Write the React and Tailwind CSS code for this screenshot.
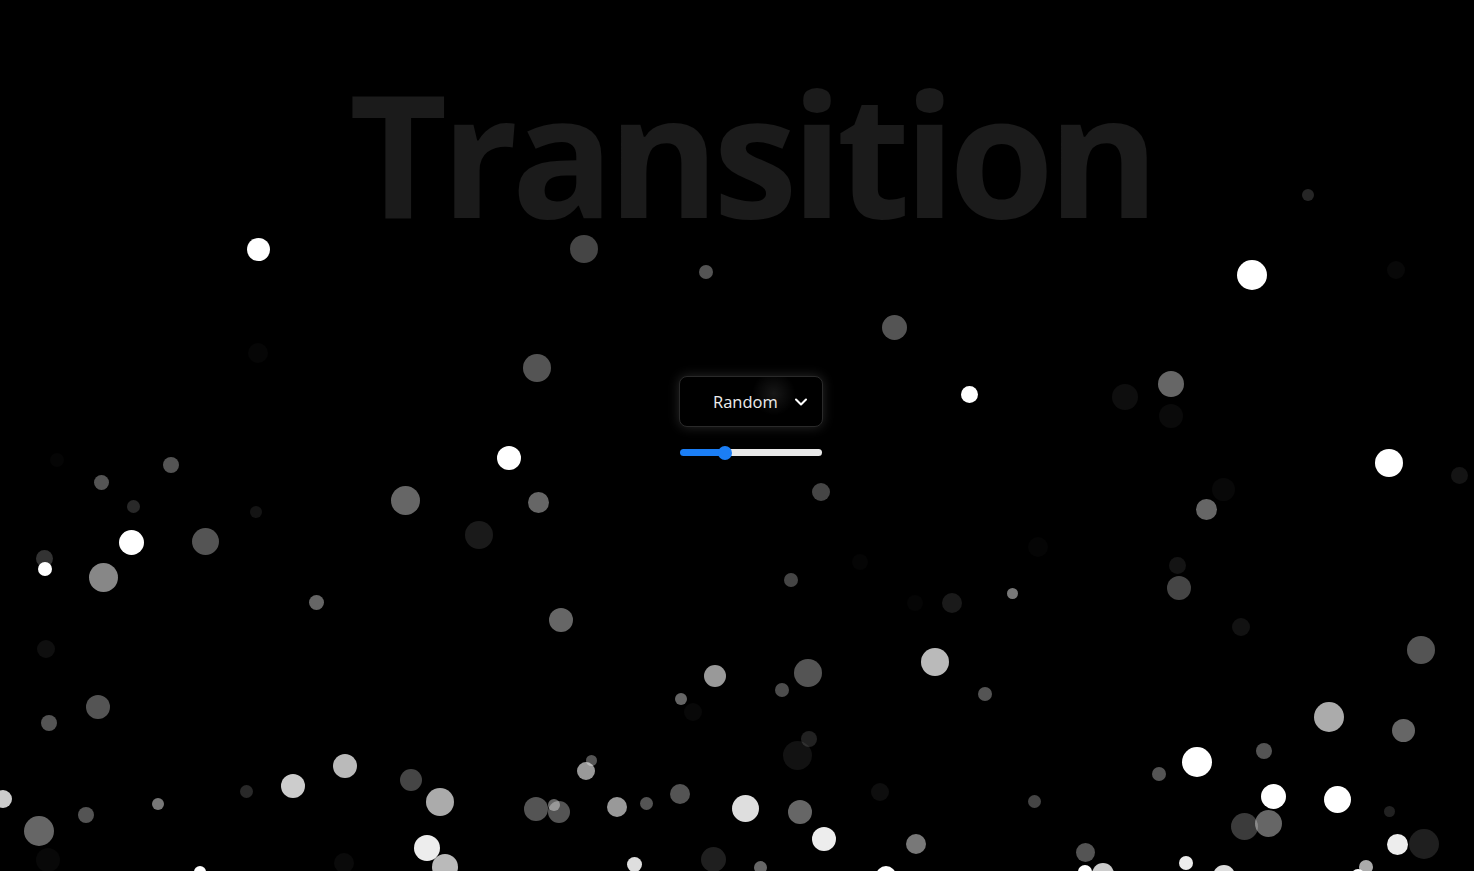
import { ChevronDown } from 'lucide-react'

// particles: [x, y, diameter, opacity]
const DOTS = [
  [258, 249, 23, 1], [584, 249, 28, 0.27], [706, 272, 14, 0.33], [1308, 195, 12, 0.15],
  [1252, 275, 30, 1], [1396, 270, 18, 0.03], [894, 327, 25, 0.33], [537, 368, 28, 0.33],
  [258, 353, 20, 0.025], [969, 394, 17, 1], [1125, 397, 26, 0.055], [1171, 384, 26, 0.4],
  [1171, 416, 24, 0.04], [509, 458, 24, 1], [1389, 463, 28, 1], [1459, 475, 17, 0.08],
  [1223, 489, 23, 0.03], [1206, 509, 21, 0.4], [171, 465, 16, 0.33], [101, 482, 15, 0.33],
  [133, 506, 13, 0.16], [256, 512, 12, 0.08], [405, 500, 29, 0.4], [538, 502, 21, 0.4],
  [479, 535, 28, 0.1], [131, 542, 25, 1], [205, 541, 27, 0.33], [44, 558, 17, 0.2],
  [45, 569, 14, 1], [103, 577, 29, 0.53], [316, 602, 15, 0.4], [561, 620, 24, 0.4],
  [821, 492, 18, 0.27], [1038, 547, 20, 0.02], [860, 562, 16, 0.02], [1177, 565, 17, 0.08],
  [1179, 588, 24, 0.27], [1012, 593, 11, 0.47], [952, 603, 20, 0.1], [915, 603, 16, 0.02],
  [1241, 627, 18, 0.07], [791, 580, 14, 0.27], [46, 649, 18, 0.06], [98, 707, 24, 0.33],
  [49, 723, 16, 0.33], [1421, 650, 28, 0.33], [935, 662, 28, 0.73], [715, 676, 22, 0.6],
  [808, 673, 28, 0.33], [782, 690, 14, 0.3], [681, 699, 12, 0.4], [693, 712, 18, 0.03],
  [985, 694, 14, 0.33], [809, 739, 16, 0.13], [797, 755, 29, 0.07], [880, 792, 18, 0.055],
  [1034, 801, 13, 0.27], [1329, 717, 30, 0.67], [1403, 730, 23, 0.4], [1264, 751, 16, 0.33],
  [1197, 762, 30, 1], [1159, 774, 14, 0.33], [1273, 796, 25, 1], [1337, 799, 27, 1],
  [1389, 811, 11, 0.13], [1244, 826, 27, 0.23], [1268, 823, 27, 0.4], [1397, 844, 21, 0.93],
  [1424, 844, 30, 0.12], [1085, 852, 19, 0.33], [1186, 863, 14, 0.93], [1085, 872, 14, 1],
  [1103, 874, 22, 0.8], [1224, 876, 22, 0.87], [1366, 867, 14, 0.67], [1358, 876, 14, 1],
  [591, 760, 11, 0.33], [586, 771, 18, 0.6], [536, 809, 24, 0.33], [559, 812, 22, 0.33],
  [554, 805, 12, 0.4], [617, 807, 20, 0.6], [646, 803, 13, 0.33], [680, 794, 20, 0.33],
  [745, 808, 27, 0.87], [800, 812, 24, 0.4], [824, 839, 24, 0.93], [916, 844, 20, 0.47],
  [634, 864, 15, 0.87], [713, 859, 25, 0.12], [760, 867, 13, 0.4], [886, 876, 20, 1],
  [3, 799, 18, 0.8], [39, 831, 30, 0.4], [86, 815, 16, 0.33],
  [158, 804, 12, 0.47], [246, 791, 13, 0.16], [293, 786, 24, 0.8], [345, 766, 24, 0.73],
  [411, 780, 22, 0.27], [440, 802, 28, 0.67], [427, 848, 26, 0.93], [445, 867, 26, 0.73],
  [200, 872, 12, 1], [344, 863, 20, 0.04], [48, 860, 24, 0.03], [57, 460, 14, 0.02],
]

function Dot({ x, y, d, o }) {
  return (
    <div
      className="absolute rounded-full bg-white"
      style={{ left: x - d / 2, top: y - d / 2, width: d, height: d, opacity: o }}
    />
  )
}

export default function App() {
  return (
    <div className="relative w-full h-screen overflow-hidden bg-black" style={{ fontFamily: '"Open Sans", sans-serif' }}>
      {DOTS.map(([x, y, d, o], i) => <Dot key={i} x={x} y={y} d={d} o={o} />)}

      <div className="relative z-10 flex flex-col items-center pl-[28px]">
        <h1 className="mt-[67px] text-[170px] leading-none font-bold text-[#1b1b1b] tracking-[-6.5px] select-none">
          Transition
        </h1>

        <div className="mt-[139px] flex flex-col items-center gap-[22px]">
          <div className="relative flex items-center justify-between w-[144px] h-[51px] pl-[33px] pr-[11px] rounded-lg border border-[#2a2a2a] bg-black shadow-[0_0_12px_rgba(255,255,255,0.16)] bg-[radial-gradient(circle_at_66%_34%,rgba(255,255,255,0.09),transparent_22%)]">
            <span className="text-[16.5px] text-[#ededed] translate-y-[1px]">Random</span>
            <ChevronDown size={20} strokeWidth={2.5} className="text-white" />
          </div>
          <input
            type="range"
            min="0"
            max="100"
            defaultValue="30"
            className="w-[142px] h-[7px] m-0 appearance-none rounded-full bg-[linear-gradient(to_right,#1b7ef5_45px,#e8e8e8_45px)] [&::-webkit-slider-thumb]:appearance-none [&::-webkit-slider-thumb]:w-[14px] [&::-webkit-slider-thumb]:h-[14px] [&::-webkit-slider-thumb]:rounded-full [&::-webkit-slider-thumb]:bg-[#1b7ef5]"
          />
        </div>
      </div>
    </div>
  )
}
